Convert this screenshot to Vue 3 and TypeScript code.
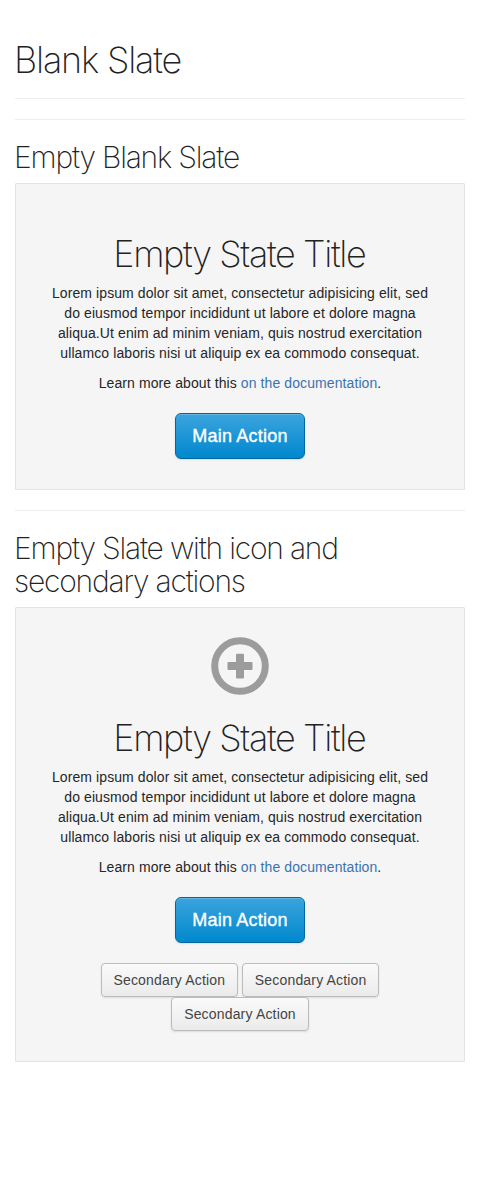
<script setup lang="ts">
interface Slate {
  heading: string[]
  icon: boolean
  secondary: string[][]
}

const slates: Slate[] = [
  { heading: ['Empty Blank Slate'], icon: false, secondary: [] },
  {
    heading: ['Empty Slate with icon and', 'secondary actions'],
    icon: true,
    secondary: [['Secondary Action', 'Secondary Action'], ['Secondary Action']],
  },
]

const description: string[] = [
  'Lorem ipsum dolor sit amet, consectetur adipisicing elit, sed',
  'do eiusmod tempor incididunt ut labore et dolore magna',
  'aliqua.Ut enim ad minim veniam, quis nostrud exercitation',
  'ullamco laboris nisi ut aliquip ex ea commodo consequat.',
]
</script>

<template>
  <main class="page">
    <header class="page-header">
      <h1>Blank Slate</h1>
    </header>
    <section v-for="(slate, i) in slates" :key="i" class="example">
      <h2>
        <span v-for="line in slate.heading" :key="line" class="line">{{ line }}</span>
      </h2>
      <div class="blank-slate">
        <svg v-if="slate.icon" class="icon" viewBox="0 0 58 58" aria-hidden="true">
          <circle cx="29" cy="29" r="25.3" fill="none" stroke="#9c9c9c" stroke-width="7" />
          <path
            d="M26 16.7h6a1 1 0 0 1 1 1v7.3h7.5a1 1 0 0 1 1 1v6a1 1 0 0 1-1 1H33v7.5a1 1 0 0 1-1 1h-6a1 1 0 0 1-1-1V33h-7.5a1 1 0 0 1-1-1v-6a1 1 0 0 1 1-1H25v-7.3a1 1 0 0 1 1-1z"
            fill="#9c9c9c"
          />
        </svg>
        <h3>Empty State Title</h3>
        <p>
          <span v-for="line in description" :key="line" class="line">{{ line }}</span>
        </p>
        <p>Learn more about this <a href="#">on the documentation</a>.</p>
        <button class="btn btn-primary" type="button">Main Action</button>
        <div v-if="slate.secondary.length" class="secondary">
          <div v-for="(row, r) in slate.secondary" :key="r" class="row">
            <button v-for="(label, b) in row" :key="b" class="btn" type="button">{{ label }}</button>
          </div>
        </div>
      </div>
    </section>
  </main>
</template>

<style>
body {
  margin: 0;
  background: #fff;
}
</style>

<style scoped>
.page {
  box-sizing: border-box;
  min-height: 1182px;
  padding: 40px 15px 0;
  font-family: "Liberation Sans", Arial, sans-serif;
  font-size: 14px;
  line-height: 20px;
  color: #262626;
}
h1,
h2,
h3 {
  margin: 0;
  font-family: Inter, "Liberation Sans", sans-serif;
  font-weight: 200;
  color: #222;
  white-space: nowrap;
}
h1,
h3 {
  font-size: 36px;
  line-height: 40px;
}
h1 {
  margin-left: -1px;
  letter-spacing: -1.2px;
}
h3 {
  letter-spacing: -1.38px;
  text-indent: -1.4px;
}
h2 {
  margin: 0 0 9px -1px;
  font-size: 30px;
  line-height: 33px;
  letter-spacing: -1.2px;
}
.page-header {
  padding-bottom: 18px;
  border-bottom: 1px solid #eee;
}
.example {
  margin-top: 20px;
  padding-top: 21px;
  border-top: 1px solid #eee;
}
.line {
  display: block;
  white-space: nowrap;
}
.blank-slate {
  box-sizing: border-box;
  display: flex;
  flex-direction: column;
  align-items: center;
  padding: 50px 0 30px;
  border: 1px solid #e3e3e3;
  border-radius: 1px;
  background: #f5f5f5;
  text-align: center;
}
.icon {
  width: 58px;
  height: 58px;
  margin: -21px 0 23px;
}
p {
  margin: 10px 0 0;
  letter-spacing: 0.095px;
}
h3 + p {
  margin-top: 9px;
}
a {
  color: #3b73af;
  text-decoration: none;
}
.btn {
  box-sizing: border-box;
  display: block;
  width: 137.4px;
  height: 34px;
  padding: 0;
  border: 1px solid #bbb;
  border-radius: 4px;
  background: linear-gradient(#fafafa, #ebebeb);
  box-shadow: inset 0 1px 0 rgba(255, 255, 255, 0.2), 0 1px 2px rgba(0, 0, 0, 0.1);
  font: 14px/20px "Liberation Sans", Arial, sans-serif;
  letter-spacing: 0.17px;
  color: #444;
  white-space: nowrap;
}
.btn-primary {
  width: 130px;
  height: 46px;
  margin-top: 20px;
  border-color: #0067a0;
  border-radius: 6px;
  background: linear-gradient(#3ba4dd, #0088ce);
  font-size: 18px;
  letter-spacing: 0.22px;
  -webkit-text-stroke: 0.35px #fff;
  color: #fff;
}
.secondary {
  margin-top: 20px;
}
.row {
  display: flex;
  justify-content: center;
  gap: 4px;
}
</style>
